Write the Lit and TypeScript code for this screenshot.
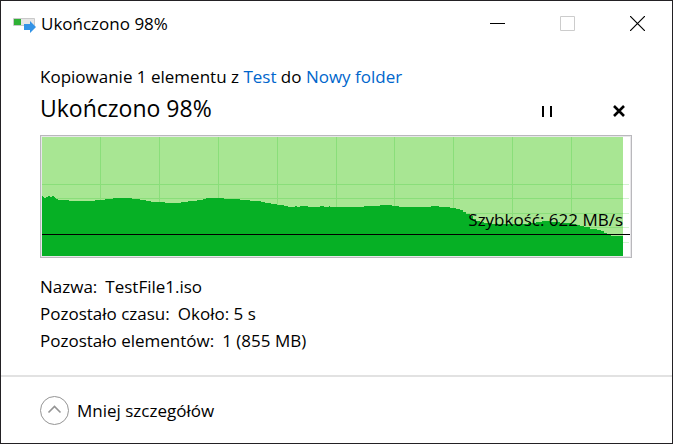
import { LitElement, html, css, svg } from "lit";
import { customElement } from "lit/decorators.js";

const WIDTH = 588;
const HEIGHT = 119;
const DONE = 581;

// Each pair is [start x, top y] of one level of the speed history.
const LEVELS: [number, number][] = [
  [0, 59], [1, 60], [2, 61], [4, 60], [6, 59], [8, 60], [10, 59], [12, 60], [13, 61], [14, 62],
  [16, 63], [27, 64], [53, 63], [63, 62], [71, 61], [90, 62], [98, 63], [104, 64], [109, 65],
  [123, 66], [139, 65], [146, 64], [155, 63], [161, 62], [164, 61], [182, 62], [198, 63],
  [208, 64], [219, 65], [223, 66], [229, 67], [235, 68], [242, 69], [246, 70], [253, 69],
  [255, 70], [258, 69], [266, 70], [278, 69], [282, 70], [287, 69], [288, 70], [322, 69],
  [338, 68], [350, 69], [357, 70], [389, 69], [397, 70], [408, 71], [414, 72], [418, 73],
  [421, 75], [424, 77], [428, 79], [431, 82], [434, 84], [438, 85], [442, 86], [450, 87],
  [486, 86], [494, 85], [500, 84], [508, 85], [518, 86], [530, 87], [534, 88], [538, 89],
  [542, 90], [548, 92], [555, 93], [559, 94], [562, 96], [565, 98], [569, 99],
];

const area =
  LEVELS.map(([x, y], i) => `${i ? "H" + x : "M" + x + " " + HEIGHT}V${y}`).join("") +
  `H${DONE}V${HEIGHT}Z`;

const COLUMNS = [58, 117, 176, 235, 294, 352, 411, 470, 529];
const ROWS = [47, 61, 76, 90, 105];

@customElement("app-root")
export class AppRoot extends LitElement {
  static styles = css`
    :host {
      display: block;
      font: 17px/27px "Segoe UI", "Open Sans", "Noto Sans", sans-serif;
      color: #000;
    }
    * { box-sizing: border-box; }
    .window {
      display: flex;
      flex-direction: column;
      min-height: 100vh;
      background: #fff;
      border: 1px solid #232124;
    }
    button {
      padding: 0;
      border: 0;
      background: none;
      font: inherit;
      color: inherit;
    }
    svg { display: block; }
    .bar { display: flex; align-items: center; height: 44px; padding-left: 12px; }
    .bar .title { flex: 1; margin-left: 5px; }
    .bar button {
      display: flex;
      align-items: center;
      justify-content: center;
      width: 70px;
      height: 44px;
    }
    .body { flex: 1; padding: 18px 40px 0 39px; }
    p, h1 { margin: 0; }
    a { color: #0066cc; text-decoration: none; }
    .status { display: flex; align-items: end; height: 36px; }
    h1 { flex: 1; font-size: 23px; font-weight: 400; line-height: 36px; }
    .status button {
      display: flex;
      align-items: center;
      justify-content: center;
      width: 26px;
      height: 30px;
    }
    .actions { display: flex; gap: 46px; }
    .chart {
      position: relative;
      margin-top: 9px;
      border: 1px solid #b9b8bc;
      padding: 1px;
      background: #e8e7ea;
    }
    .chart svg { width: 100%; height: 119px; background: #fff; }
    .speed { position: absolute; right: 8px; top: 70px; }
    dl { margin: 15px 0 0; }
    .row { display: flex; gap: 8px; }
    dd { margin: 0; }
    .foot {
      display: flex;
      height: 68px;
      align-items: center;
      padding-left: 39px;
      border-top: 2px solid #e2e2e2;
    }
    .less { display: flex; align-items: center; gap: 8px; }
  `;

  render() {
    return html`
      <div class="window">
        <header class="bar">
          <svg width="23" height="20" viewBox="0 0 23 20" aria-hidden="true">
            <path d="M.5 5.500h21v7H.5z" fill="#e6e6e6" stroke="#c9c9c9" />
            <path d="M1 6h7v6H1z" fill="#2fb135" />
            <path d="M11 11h6V8l6 6-6 6v-3h-6z" fill="#3393e6" />
          </svg>
          <span class="title">Ukończono 98%</span>
          <button aria-label="Minimalizuj">
            <svg width="15" height="15"><path d="M0 7.5h15" stroke="#000" /></svg>
          </button>
          <button aria-label="Maksymalizuj" disabled>
            <svg width="15" height="15"><path d="M.5.5h14v14H.5z" fill="none" stroke="#ccc" /></svg>
          </button>
          <button aria-label="Zamknij">
            <svg width="15" height="15"><path d="M0 0l15 15M15 0L0 15" stroke="#000" stroke-width="1.2" /></svg>
          </button>
        </header>
        <main class="body">
          <p>Kopiowanie 1 elementu z <a href="#test">Test</a> do <a href="#nowy">Nowy folder</a></p>
          <div class="status">
            <h1>Ukończono 98%</h1>
            <div class="actions">
              <button aria-label="Wstrzymaj">
                <svg width="10" height="11"><path d="M0 0h2v11H0zM8 0h2v11H8z" /></svg>
              </button>
              <button aria-label="Anuluj">
                <svg width="12" height="12"><path d="M1 1l10 10M11 1L1 11" stroke="#000" stroke-width="2.6" /></svg>
              </button>
            </div>
          </div>
          <div class="chart">
            <svg viewBox="0 0 ${WIDTH} ${HEIGHT}" preserveAspectRatio="none" shape-rendering="crispEdges" aria-hidden="true">
              ${ROWS.map((y) => svg`<rect x="0" y=${y} width="587" height="1" fill="#d3f3d1" />`)}
              <rect width=${DONE} height=${HEIGHT} fill="#a8e693" />
              ${ROWS.map((y) => svg`<rect x="0" y=${y} width=${DONE} height="1" fill="#8ade7a" />`)}
              ${COLUMNS.map((x) => svg`<rect x=${x} y="0" width="1" height=${HEIGHT} fill="#8ade7a" />`)}
              <path d=${area} fill="#06b025" />
              <rect y="97" width=${WIDTH} height="1" fill="#000" />
            </svg>
            <span class="speed">Szybkość: 622 MB/s</span>
          </div>
          <dl>
            <div class="row"><dt>Nazwa:</dt><dd>TestFile1.iso</dd></div>
            <div class="row"><dt>Pozostało czasu:</dt><dd>Około: 5 s</dd></div>
            <div class="row"><dt>Pozostało elementów:</dt><dd>1 (855 MB)</dd></div>
          </dl>
        </main>
        <footer class="foot">
          <button class="less">
            <svg width="29" height="29" fill="none" stroke="#949494" aria-hidden="true">
              <circle cx="14.5" cy="14.5" r="14" stroke-width="1" />
              <path d="M8.500 16.500L14.500 10.500L20.500 16.500" stroke-width="1.6" />
            </svg>
            Mniej szczegółów
          </button>
        </footer>
      </div>
    `;
  }
}
